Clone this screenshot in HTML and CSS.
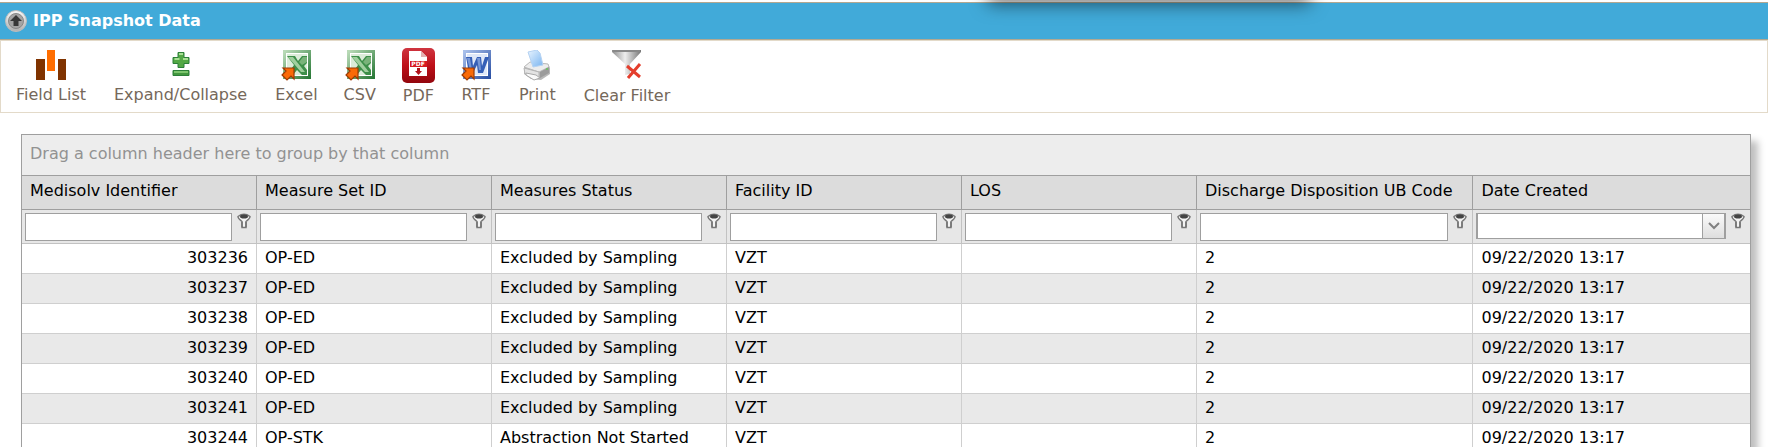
FILE: index.html
```html
<!DOCTYPE html>
<html lang="en">
<head>
    <meta charset="UTF-8">
    <meta name="viewport" content="width=device-width, initial-scale=1.0">
    <title>IPP Snapshot Data</title>
    <link rel="stylesheet" href="styles.css">
</head>
<body>
<svg class="defs" aria-hidden="true">
    <defs>
        <linearGradient id="knob" x1="0" y1="0" x2="0" y2="1">
            <stop offset="0" stop-color="#fafafa"/>
            <stop offset="1" stop-color="#b0b0b0"/>
        </linearGradient>
        <linearGradient id="green" x1="0" y1="0" x2="1" y2="1">
            <stop offset="0" stop-color="#b9dab7"/>
            <stop offset="1" stop-color="#2a7a38"/>
        </linearGradient>
        <linearGradient id="blue" x1="0" y1="0" x2="1" y2="1">
            <stop offset="0" stop-color="#a9c0ea"/>
            <stop offset="1" stop-color="#2b51a5"/>
        </linearGradient>
        <linearGradient id="red" x1="0" y1="0" x2="0" y2="1">
            <stop offset="0" stop-color="#cf3540"/>
            <stop offset="0.5" stop-color="#be1019"/>
            <stop offset="1" stop-color="#92060d"/>
        </linearGradient>
        <linearGradient id="steel" x1="0" y1="0" x2="1" y2="0">
            <stop offset="0" stop-color="#8c8c8c"/>
            <stop offset="0.45" stop-color="#eeeeee"/>
            <stop offset="1" stop-color="#777777"/>
        </linearGradient>
        <linearGradient id="paper" x1="0" y1="0" x2="1" y2="1">
            <stop offset="0" stop-color="#e8f4ff"/>
            <stop offset="1" stop-color="#79b4f0"/>
        </linearGradient>
    </defs>
    <symbol id="arrow" viewBox="0 0 14 14">
        <path d="M2 1h11v11l-3-3-4 4-5-5 4-4z" fill="#f96a08" stroke="#9c3a04" stroke-width="1.2"/>
    </symbol>
    <symbol id="excel" viewBox="0 0 30 32">
        <rect x="3.500" y="1.500" width="25" height="26" fill="#fff" stroke="url(#green)" stroke-width="3"/>
        <rect x="6" y="4" width="20" height="21" fill="#dcecd9"/>
        <path d="M6 6h8l3 5 4-5h5v7l-3 3 3 4v5h-5l-5-5-4 5H6l7-10z" fill="#3d8f49"/>
        <path d="M7 7h5l12 15h-4z" fill="#a0cf9e"/>
        <path d="M18 12l4-5h4v5l-5 3z" fill="#7ab37a"/>
        <use href="#arrow" x="0" y="17" width="14" height="14"/>
    </symbol>
    <symbol id="funnel" viewBox="0 0 14 16">
        <path d="M1 3.500Q7 -1 13 3.500Q13 5.500 9 8.500V14.500H5V8.500Q1 5.500 1 3.500z" fill="#f4f4f4" stroke="#777" stroke-width="1.500"/>
        <ellipse cx="7" cy="3.500" rx="4" ry="2" fill="#444"/>
        <path d="M5 9v5M9 9v5" stroke="#666"/>
    </symbol>
</svg>

<div class="popup-shadow"></div>

<div class="title-bar">
    <button class="collapse" aria-label="Collapse panel">
        <svg width="22" height="22" viewBox="0 0 22 22">
            <circle cx="11" cy="11" r="10.500" fill="url(#knob)" stroke="#bbb"/>
            <circle cx="11" cy="11" r="7.500" fill="#a4a4a4" stroke="#888"/>
            <path d="M11 5l6 6h-3.500v5h-5v-5H5z" fill="#383838"/>
        </svg>
    </button>
    <h1>IPP Snapshot Data</h1>
</div>

<div class="toolbar">
    <button class="tool">
        <svg width="30" height="32" viewBox="0 0 30 32">
            <path d="M0 9h9v21H0zM22 9h8v21h-8z" fill="#803300"/>
            <path d="M11 0h8v21h-8z" fill="#ff6d00"/>
        </svg>
        <span>Field List</span>
    </button>
    <button class="tool">
        <svg width="18" height="32" viewBox="0 0 18 32">
            <path d="M6 2.500h6v5h5v6h-5v4H6v-4H1v-6h5z" fill="#53a845" stroke="#2b7f38"/>
            <path d="M7 4h4M2.500 9h5M11 9h5" stroke="#a8df93" stroke-width="2"/>
            <path d="M1 20.500h16v5H1z" fill="#43973f" stroke="#2b7f38"/>
            <path d="M2 22h14" stroke="#7cc56d" stroke-width="2"/>
        </svg>
        <span>Expand/Collapse</span>
    </button>
    <div class="exports">
        <button class="tool">
            <svg width="30" height="32"><use href="#excel"/></svg>
            <span>Excel</span>
        </button>
        <button class="tool">
            <svg width="30" height="32"><use href="#excel"/></svg>
            <span>CSV</span>
        </button>
        <button class="tool tall">
            <svg width="33" height="35" viewBox="0 0 33 35">
                <rect width="33" height="35" rx="5" fill="url(#red)"/>
                <path d="M7 3h12l6 6v19H7z" fill="#fff"/>
                <path d="M19 3v6h6z" fill="#e3b0b0"/>
                <rect x="8" y="13" width="17" height="6" fill="#d71920"/>
                <text x="16" y="18" class="pdf-mark">PDF</text>
                <path d="M15 20h3v3h2l-3.500 4-3.500-4h2z" fill="#b01018"/>
            </svg>
            <span>PDF</span>
        </button>
        <button class="tool">
            <svg width="30" height="32" viewBox="0 0 30 32">
                <rect x="3.500" y="1.500" width="25" height="26" fill="#fff" stroke="url(#blue)" stroke-width="3"/>
                <rect x="6" y="4" width="20" height="21" fill="#dfe8f8"/>
                <path d="M5 7h6l1 9 4-9h4l1 9 3-9h4l-6 16h-5l-1-8-4 8H8z" fill="#355fb7"/>
                <path d="M6 8h3l2 12h-2zM16 8h3l1 12h-2z" fill="#7797d6"/>
                <use href="#arrow" x="0" y="17" width="14" height="14"/>
            </svg>
            <span>RTF</span>
        </button>
    </div>
    <button class="tool">
        <svg width="28" height="32" viewBox="0 0 28 32">
            <path d="M1 17L7 12l18 2 2 4v6l-9 6-10-1-7-5z" fill="#b8b8b8"/>
            <path d="M1 17L7 12l18 2 1 3-10 5z" fill="#ededed" stroke="#bbb"/>
            <path d="M5 2L14 0l3 3 3 12-10 2z" fill="url(#paper)" stroke="#b5d2f2"/>
            <path d="M1 18l15 4v6L2 24z" fill="#e3e3e3" stroke="#b5b5b5"/>
            <path d="M3 23l10 2 4 3-6 2-8-5z" fill="#fafafa" stroke="#aaa"/>
            <path d="M17 22l9-5v6l-9 5z" fill="#9b9b9b"/>
            <circle cx="24" cy="19" r="1" fill="#65c456"/>
        </svg>
        <span>Print</span>
    </button>
    <button class="tool wide">
        <svg width="30" height="32" viewBox="0 0 30 32">
            <path d="M0 0h29v2L18 14v10l-5 1V14L0 2z" fill="url(#steel)"/>
            <path d="M1 1h27" stroke="#888" stroke-width="2"/>
            <path d="M15 16l13 11M28 14L16 28" stroke="#e43e2d" stroke-width="3"/>
        </svg>
        <span>Clear Filter</span>
    </button>
</div>

<div class="grid">
    <div class="group-panel">Drag a column header here to group by that column</div>
    <table>
        <colgroup>
            <col class="col"><col class="col"><col class="col"><col class="col"><col class="col">
            <col class="col-wide"><col class="col-wide">
        </colgroup>
        <thead>
        <tr>
            <th>Medisolv Identifier</th>
            <th>Measure Set ID</th>
            <th>Measures Status</th>
            <th>Facility ID</th>
            <th>LOS</th>
            <th>Discharge Disposition UB Code</th>
            <th>Date Created</th>
        </tr>
        <tr class="filters">
            <td><div class="filter"><input type="text" aria-label="Filter Medisolv Identifier"><button aria-label="Filter options"><svg width="14" height="16"><use href="#funnel"/></svg></button></div></td>
            <td><div class="filter"><input type="text" aria-label="Filter Measure Set ID"><button aria-label="Filter options"><svg width="14" height="16"><use href="#funnel"/></svg></button></div></td>
            <td><div class="filter"><input type="text" aria-label="Filter Measures Status"><button aria-label="Filter options"><svg width="14" height="16"><use href="#funnel"/></svg></button></div></td>
            <td><div class="filter"><input type="text" aria-label="Filter Facility ID"><button aria-label="Filter options"><svg width="14" height="16"><use href="#funnel"/></svg></button></div></td>
            <td><div class="filter"><input type="text" aria-label="Filter LOS"><button aria-label="Filter options"><svg width="14" height="16"><use href="#funnel"/></svg></button></div></td>
            <td><div class="filter"><input type="text" aria-label="Filter Discharge Disposition UB Code"><button aria-label="Filter options"><svg width="14" height="16"><use href="#funnel"/></svg></button></div></td>
            <td>
                <div class="filter">
                    <div class="date-edit">
                        <input type="text" aria-label="Filter Date Created">
                        <button class="drop" aria-label="Open calendar">
                            <svg width="12" height="8" viewBox="0 0 12 8"><path d="M1 1l5 5 5-5" fill="none" stroke="#808080" stroke-width="2"/></svg>
                        </button>
                    </div>
                    <button aria-label="Filter options"><svg width="14" height="16"><use href="#funnel"/></svg></button>
                </div>
            </td>
        </tr>
        </thead>
        <tbody>
        <tr><td>303236</td><td>OP-ED</td><td>Excluded by Sampling</td><td>VZT</td><td></td><td>2</td><td>09/22/2020 13:17</td></tr>
        <tr><td>303237</td><td>OP-ED</td><td>Excluded by Sampling</td><td>VZT</td><td></td><td>2</td><td>09/22/2020 13:17</td></tr>
        <tr><td>303238</td><td>OP-ED</td><td>Excluded by Sampling</td><td>VZT</td><td></td><td>2</td><td>09/22/2020 13:17</td></tr>
        <tr><td>303239</td><td>OP-ED</td><td>Excluded by Sampling</td><td>VZT</td><td></td><td>2</td><td>09/22/2020 13:17</td></tr>
        <tr><td>303240</td><td>OP-ED</td><td>Excluded by Sampling</td><td>VZT</td><td></td><td>2</td><td>09/22/2020 13:17</td></tr>
        <tr><td>303241</td><td>OP-ED</td><td>Excluded by Sampling</td><td>VZT</td><td></td><td>2</td><td>09/22/2020 13:17</td></tr>
        <tr><td>303244</td><td>OP-STK</td><td>Abstraction Not Started</td><td>VZT</td><td></td><td>2</td><td>09/22/2020 13:17</td></tr>
        </tbody>
    </table>
</div>
</body>
</html>
```
FILE: styles.css
```css
* {
    box-sizing: border-box;
}

html {
    height: 100%;
}

body {
    height: 100%;
    margin: 0;
    padding-top: 2px;
    overflow-x: hidden;
    overflow-y: auto;
    scrollbar-width: none;
    background-color: #fff;
    color: #000;
    font: 16px/20px Verdana, "DejaVu Sans", sans-serif;
}

button,
input {
    font: inherit;
    margin: 0;
    padding: 0;
}

button {
    border: none;
    background: none;
    cursor: pointer;
}

svg {
    display: block;
}

.defs {
    position: absolute;
    width: 0;
    height: 0;
}

/* Lower edge of the popup that hangs over the page */
.popup-shadow {
    position: absolute;
    top: -20px;
    left: 56%;
    width: 18%;
    height: 20px;
    box-shadow: 0 2px 18px 2px rgba(0, 0, 0, 0.55);
}

.title-bar {
    display: flex;
    align-items: center;
    gap: 6px;
    height: 38px;
    padding: 0 5px;
    border-top: 1px solid #b3a890;
    border-bottom: 1px solid #b3a890;
    background-color: #41aad9;
    color: #fff;
}

.title-bar h1 {
    margin: 0;
    font-size: 16px;
    font-weight: bold;
}

.toolbar {
    display: flex;
    align-items: flex-start;
    gap: 28px;
    height: 73px;
    padding: 9px 15px 0;
    border: 1px solid #e3dac9;
}

.exports {
    display: flex;
    align-items: flex-start;
    gap: 26px;
}

.tool {
    display: flex;
    flex-direction: column;
    align-items: center;
    gap: 3px;
    color: #75685a;
}

.tool.tall {
    margin-top: -2px;
}

.tool.wide {
    gap: 4px;
}

.pdf-mark {
    fill: #fff;
    font-size: 6px;
    font-weight: bold;
    text-anchor: middle;
}

.grid {
    margin: 21px 17px 0 21px;
    border: 1px solid #9f9f9f;
    box-shadow: 7px 7px 7px rgba(0, 0, 0, 0.25);
}

.group-panel {
    height: 41px;
    padding: 9px 8px;
    border-bottom: 1px solid #9f9f9f;
    background-color: #ededed;
    color: #929292;
}

table {
    width: 100%;
    table-layout: fixed;
    border-collapse: separate;
    border-spacing: 0;
}

.col {
    width: 13.6%;
}

.col-wide {
    width: 16%;
}

th {
    height: 34px;
    padding: 0 8px 3px;
    border-right: 1px solid #9f9f9f;
    border-bottom: 1px solid #9f9f9f;
    background-color: #dcdcdc;
    font-weight: normal;
    text-align: left;
    white-space: nowrap;
}

td {
    height: 30px;
    padding: 0 8px 2px;
    border-right: 1px solid #cfcfcf;
    border-bottom: 1px solid #cfcfcf;
    white-space: nowrap;
}

th:last-child,
td:last-child {
    border-right: none;
}

tbody td:first-child {
    text-align: right;
}

tbody tr:nth-child(even) {
    background-color: #e9e9e9;
}

.filters td {
    height: 34px;
    padding: 3px 5px 2px 3px;
    border-color: #c2c2c2;
    background-color: #e7e7e7;
}

.filter {
    display: flex;
    align-items: flex-start;
    gap: 5px;
    height: 28px;
}

.filter input {
    flex: 1;
    min-width: 0;
    height: 28px;
    padding: 0 4px;
    border: 1px solid #9f9f9f;
    background-color: #fff;
}

.date-edit {
    display: flex;
    flex: 1;
    height: 26px;
    border: 1px solid #9f9f9f;
    border-width: 1px 2px;
}

.filter .date-edit input {
    height: 24px;
    border: none;
}

.drop {
    display: flex;
    align-items: center;
    justify-content: center;
    width: 22px;
    border-left: 1px solid #9f9f9f;
    background: linear-gradient(#fafafa, #dedede);
}
```
